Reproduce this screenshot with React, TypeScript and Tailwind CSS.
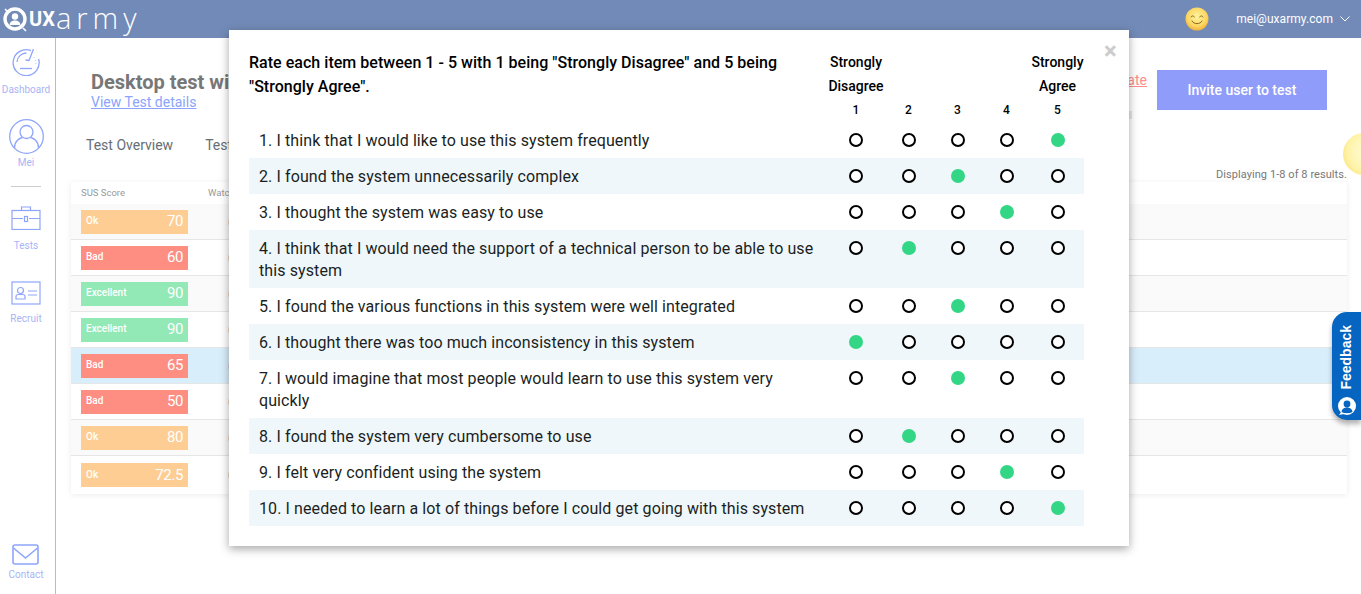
import React from 'react';

const answers = [
  { text: '1. I think that I would like to use this system frequently', value: 5 },
  { text: '2. I found the system unnecessarily complex', value: 3 },
  { text: '3. I thought the system was easy to use', value: 4 },
  { text: '4. I think that I would need the support of a technical person to be able to use this system', value: 2 },
  { text: '5. I found the various functions in this system were well integrated', value: 3 },
  { text: '6. I thought there was too much inconsistency in this system', value: 1 },
  { text: '7. I would imagine that most people would learn to use this system very quickly', value: 3 },
  { text: '8. I found the system very cumbersome to use', value: 2 },
  { text: '9. I felt very confident using the system', value: 4 },
  { text: '10. I needed to learn a lot of things before I could get going with this system', value: 5 },
];

const scores = [
  { label: 'Ok', score: '70', color: 'bg-[#fecd94]' },
  { label: 'Bad', score: '60', color: 'bg-[#fe8d82]' },
  { label: 'Excellent', score: '90', color: 'bg-[#92e9b5]' },
  { label: 'Excellent', score: '90', color: 'bg-[#92e9b5]' },
  { label: 'Bad', score: '65', color: 'bg-[#fe8d82]' },
  { label: 'Bad', score: '50', color: 'bg-[#fe8d82]' },
  { label: 'Ok', score: '80', color: 'bg-[#fecd94]' },
  { label: 'Ok', score: '72.5', color: 'bg-[#fecd94]' },
];

const DashboardIcon = () => (
  <svg width="28" height="28" viewBox="0 0 28 28" fill="none" stroke="#8fa5fb" strokeWidth="1.3">
    <path d="M19 2.600A13 13 0 1 0 26.600 11" />
    <path d="M14.500 5A9.500 9.500 0 0 0 5 14" />
    <path d="M21.500 1 17 12.500 13.500 12" />
    <path d="M8 20.500h12" />
    <path d="M22 9v.6M23.500 12v.6M24 15v.6" />
  </svg>
);

const UserIcon = () => (
  <svg width="35" height="35" viewBox="0 0 35 35" fill="none" stroke="#8fa5fb" strokeWidth="1.3">
    <circle cx="17.500" cy="17.500" r="16.800" />
    <circle cx="17.500" cy="13" r="6.500" />
    <path d="M5.500 29c0-7 5-10 8-10.500M29.500 29c0-7-5-10-8-10.500" />
  </svg>
);

const BriefcaseIcon = () => (
  <svg width="30" height="24" viewBox="0 0 30 24" fill="none" stroke="#8fa5fb" strokeWidth="1.2">
    <rect x="1" y="4.500" width="28" height="19" />
    <path d="M10.500 4.500V1h9v3.500" />
    <path d="M1 12.500h11M18 12.500h11" />
    <rect x="13.500" y="10.500" width="3" height="5" />
  </svg>
);

const CardIcon = () => (
  <svg width="30" height="24" viewBox="0 0 30 24" fill="none" stroke="#8fa5fb" strokeWidth="1.2">
    <rect x="1" y="1" width="28" height="22" />
    <circle cx="9.500" cy="9.500" r="3" />
    <path d="M5 18v-2.500c0-1.500 1-2 2.500-2h4c1.500 0 2.500.5 2.500 2V18z" />
    <path d="M17 10h9M17 14h9" />
  </svg>
);

const MailIcon = () => (
  <svg width="27" height="22" viewBox="0 0 27 22" fill="none" stroke="#8fa5fb" strokeWidth="1.6">
    <rect x="1" y="1" width="25" height="19" rx="2" />
    <path d="M1.500 4 13.500 14 25.500 4" />
  </svg>
);

const Logo = () => (
  <div className="flex items-center text-white">
    <svg width="26" height="28" viewBox="0 0 26 28" fill="none">
      <circle cx="13" cy="14" r="10" stroke="#fff" strokeWidth="3.4" />
      <circle cx="13" cy="11.500" r="3.2" fill="#fff" />
      <path d="M7.500 20c.5-3.500 3-4.500 5.500-4.500s5 1 5.500 4.500z" fill="#fff" />
      <path d="M3 4l3 3M21 23l3 3" stroke="#fff" strokeWidth="1.6" />
    </svg>
    <span className="ml-[1px] text-[20px] leading-none font-bold font-['Roboto',sans-serif] self-end mb-[7px]">UX</span>
    <span className="ml-[1px] text-[29px] leading-none font-light tracking-[5px] font-['Open_Sans',sans-serif] self-end mb-[4px]">army</span>
  </div>
);

const Smiley = () => (
  <svg width="24" height="24" viewBox="0 0 24 24" fill="none">
    <defs>
      <radialGradient id="smile" cx="50%" cy="40%" r="60%">
        <stop offset="0%" stopColor="#fff3a0" />
        <stop offset="70%" stopColor="#fbd660" />
        <stop offset="100%" stopColor="#f0b040" />
      </radialGradient>
    </defs>
    <circle cx="12" cy="12" r="11.500" fill="url(#smile)" />
    <path d="M6 10c.8-1.600 2.600-1.600 3.400 0M14.600 10c.8-1.600 2.600-1.600 3.400 0" stroke="#8a6a20" strokeWidth="1" strokeLinecap="round" />
    <path d="M7 14c1.500 3.600 8.500 3.600 10 0" stroke="#8a6a20" strokeWidth="1" strokeLinecap="round" />
  </svg>
);

const NavItem = ({
  icon,
  label,
  className = '',
  labelClass = 'mt-[8px]',
}: {
  icon: React.ReactNode;
  label: string;
  className?: string;
  labelClass?: string;
}) => (
  <div className={`flex flex-col items-center ${className}`}>
    {icon}
    <span className={`text-[10px] leading-[12px] text-[#a9b4f5] ${labelClass}`}>{label}</span>
  </div>
);

const Radio = ({ on }: { on: boolean }) => (
  <div className="flex justify-center pt-[11px]">
    {on ? (
      <div className="w-[14px] h-[14px] rounded-full bg-[#33d685]" />
    ) : (
      <div className="w-[14px] h-[14px] rounded-full border-2 border-black bg-white" />
    )}
  </div>
);

const COLS = 'grid grid-cols-[579px_56px_49px_49px_49px_53px]';

const App: React.FC = () => {
  return (
    <div className="relative h-screen overflow-hidden bg-white font-['Roboto',sans-serif]">
      <header className="h-[38px] bg-[#728ab7] flex items-center justify-between pl-[2px] pr-[11px]">
        <Logo />
        <div className="flex items-center text-white">
          <Smiley />
          <span className="ml-[27px] text-[12px] tracking-[0.05px]">mei@uxarmy.com</span>
          <svg className="ml-[7px]" width="10" height="6" viewBox="0 0 10 6" fill="none" stroke="#fff" strokeWidth="1">
            <path d="M.5.5l4.500 4.500L9.500.5" />
          </svg>
        </div>
      </header>

      <div className="flex h-[556px]">
        <aside className="w-[56px] shrink-0 border-r border-[#bbbbbb] flex flex-col items-center pt-[10px] pr-[3px]">
          <NavItem icon={<DashboardIcon />} label="Dashboard" />
          <NavItem icon={<UserIcon />} label="Mei" className="mt-[23px]" labelClass="mt-[3px]" />
          <div className="w-[30px] border-t border-[#cccccc] mt-[17px]" />
          <NavItem icon={<BriefcaseIcon />} label="Tests" className="mt-[19px]" labelClass="mt-[10px]" />
          <NavItem icon={<CardIcon />} label="Recruit" className="mt-[29px]" labelClass="mt-[8px]" />
          <NavItem icon={<MailIcon />} label="Contact" className="mt-auto mb-[13px]" labelClass="mt-[3px]" />
        </aside>

        <main className="flex-1 min-w-0 pl-[15px] pr-[14px]">
          <div className="flex justify-between pt-[32px] pl-[20px] pr-[20px]">
            <div className="w-[138px]">
              <div className="text-[20px] leading-[24px] font-bold text-[#777777] whitespace-nowrap">
                Desktop test with the longer name
              </div>
              <a className="block text-[14px] leading-[16px] text-[#8aa4fb] underline whitespace-nowrap">View Test details</a>
            </div>
            <div className="flex items-start">
              <a className="text-[14px] leading-[20px] text-[#fe8d8d] underline">Deactivate</a>
              <button className="ml-[10px] w-[170px] h-[40px] bg-[#8f9cf9] text-white text-[14px] font-medium">
                Invite user to test
              </button>
            </div>
          </div>

          <div className="flex gap-[32px] mt-[25px] pl-[15px] text-[14px] leading-[20px] text-[#666e75]">
            <span>Test Overview</span>
            <span>Test Users</span>
          </div>
          <div className="text-right text-[11px] leading-[14px] tracking-[0.07px] text-[#777777] mt-[13px]">
            Displaying 1-8 of 8 results.
          </div>

          <div className="shadow-[0_1px_6px_rgba(0,0,0,0.08)]">
            <div className="h-[22px] flex items-center pl-[10px] text-[9.5px] text-[#999999]">
              <span className="w-[127px]">SUS Score</span>
              <span>Watch</span>
            </div>
            {scores.map((row, i) => (
              <div
                key={i}
                className={`flex items-center pl-[10px] border-b border-[#e6e6e6] last:border-b-0 ${
                  i === 7 ? 'h-[38px]' : 'h-[36px]'
                } ${i === 4 ? 'bg-[#d9eefb]' : i % 2 === 0 ? 'bg-[#fafafa]' : 'bg-white'}`}
              >
                <div className={`w-[107px] h-[24px] flex items-center justify-between px-[5px] text-white ${row.color}`}>
                  <span className="text-[10px] font-medium -mt-[2px]">{row.label}</span>
                  <span className="text-[15px] tracking-[-0.4px]">{row.score}</span>
                </div>
                <div className={`ml-[40px] w-[14px] h-[14px] rounded-full ${i === 4 ? 'bg-[#d6c8ea]' : 'bg-[#eed4bd]'}`} />
              </div>
            ))}
          </div>
        </main>
      </div>

      <div className="absolute left-[1129px] top-[111px] w-[3px] h-[8px] bg-[#e8e8e8]" />

      {/* results modal */}
      <div className="absolute left-[229px] top-[30px] w-[900px] h-[516px] bg-white px-[20px] pt-[20px] shadow-[0_3px_9px_rgba(0,0,0,0.35)] text-[#1b1f23]">
        <span className="absolute left-[875px] top-[7px] text-[24px] leading-[28px] font-bold text-[#cccccc]">×</span>
        <div className={`${COLS} w-[835px] text-black font-medium`}>
          <div className="pt-[1px] text-[16px] leading-[24px] tracking-[0.03px]">
            Rate each item between 1 - 5 with 1 being "Strongly Disagree" and 5 being "Strongly Agree".
          </div>
          <div className="flex flex-col items-center text-[14px] leading-[24px]">
            <span>Strongly</span>
            <span>Disagree</span>
            <span className="text-[12px]">1</span>
          </div>
          <div className="flex flex-col justify-end text-center text-[12px] leading-[24px]">2</div>
          <div className="flex flex-col justify-end text-center text-[12px] leading-[24px]">3</div>
          <div className="flex flex-col justify-end text-center text-[12px] leading-[24px]">4</div>
          <div className="flex flex-col items-center text-[14px] leading-[24px]">
            <span>Strongly</span>
            <span>Agree</span>
            <span className="text-[12px]">5</span>
          </div>
        </div>
        {answers.map((a, i) => (
          <div key={a.text} className={`${COLS} w-[835px] ${i % 2 === 1 ? 'bg-[#eff7fb]' : ''}`}>
            <div className="pl-[10px] pr-[10px] pt-[8px] pb-[6px] text-[16px] leading-[22px] tracking-[0.1px]">{a.text}</div>
            {[1, 2, 3, 4, 5].map((n) => (
              <Radio key={n} on={a.value === n} />
            ))}
          </div>
        ))}
      </div>

      {/* chat blob peeking from the right edge */}
      <div className="absolute left-[1343px] top-[133px] w-[42px] h-[42px] rounded-full bg-[radial-gradient(circle_at_60%_45%,#fffde0,#fff3a8_60%,#f5d860)]" />

      {/* feedback tab */}
      <div className="absolute left-[1332px] top-[312px] w-[29px] h-[108px] rounded-l-[15px] bg-[#0565c0] shadow-[0_4px_5px_rgba(0,0,0,0.3)] flex flex-col items-center justify-end pb-[4px]">
        <span className="[writing-mode:vertical-rl] rotate-180 text-white text-[14px] font-bold font-['Liberation_Sans',sans-serif]">
          Feedback
        </span>
        <svg className="mt-[6px]" width="20" height="20" viewBox="0 0 20 20">
          <circle cx="10" cy="10" r="9" fill="#fff" />
          <path d="M2 19l3-4 2 3z" fill="#fff" />
          <circle cx="10" cy="8" r="3.400" fill="#0565c0" />
          <path d="M4.500 16c.5-3.500 3-4.500 5.500-4.500s5 1 5.500 4.500c-3 1.600-8 1.600-11 0z" fill="#0565c0" />
        </svg>
      </div>
    </div>
  );
};

export default App;
